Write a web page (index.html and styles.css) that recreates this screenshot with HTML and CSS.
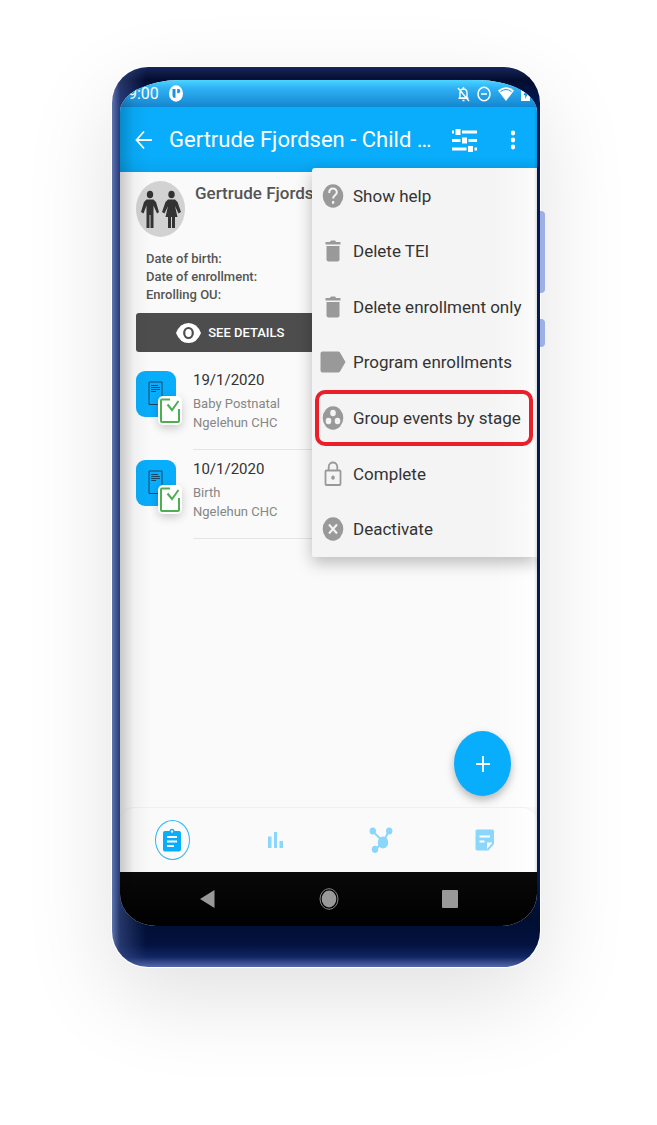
FILE: index.html
```html
<!DOCTYPE html>
<html lang="en">
<head>
<meta charset="utf-8">
<meta name="viewport" content="width=device-width, initial-scale=1">
<title>Gertrude Fjordsen - Child Programme</title>
<link rel="stylesheet" href="styles.css">
</head>
<body>
<main class="page">
  <div class="phone">
    <span class="side-key side-key-volume"></span>
    <span class="side-key side-key-power"></span>
    <div class="screen">
      <div class="status-bar">
        <span class="clock">9:00</span>
        <svg class="status-app" width="14" height="17" viewBox="0 0 14 17"><ellipse cx="7" cy="8.500" rx="7" ry="8.200" fill="#fff"/><path d="M3.500 4h3v9c-2 0-3-.8-3-2.500zM8.200 4h1.200a1.900 2.100 0 0 1 0 4.200H8.200z" fill="#1b93dc"/></svg>
        <span class="status-space"></span>
        <svg width="13" height="16" viewBox="0 0 13 16" fill="none" stroke="#fff" stroke-width="1.400"><path d="M3 12V7c0-2.500 1.200-4 3.500-4S10 4.500 10 7v5zM1.500 12.300h10M6.500 1v2M5.500 14.500h2M1 2l11 13"/></svg>
        <svg width="14" height="16" viewBox="0 0 14 16" fill="none" stroke="#fff" stroke-width="1.500"><ellipse cx="7" cy="8" rx="6" ry="6.700"/><path d="M4 8h6"/></svg>
        <svg width="16" height="16" viewBox="0 0 16 16"><path d="M0 4.500Q8-2 16 4.500L8 15z" fill="#fff"/><path d="M2.500 5.500Q8 1.500 13.500 5.500" fill="none" stroke="#1c9be6"/></svg>
        <svg width="9" height="16" viewBox="0 0 9 16"><path d="M0 2.500h2.500V1h4v1.500H9V15H0z" fill="#fff"/><path d="M5 4.500 2.500 9h1.700v4L6.700 8H5z" fill="#1c8fd8"/></svg>
      </div>
      <header class="app-bar">
        <button class="icon-button" aria-label="Back"><svg width="18" height="20" viewBox="0 0 18 20" fill="none" stroke="#fff" stroke-width="1.800"><path d="M17 10H1.500M9 1.500 1.500 10 9 18.500"/></svg></button>
        <h1 class="app-title">Gertrude Fjordsen - Child …</h1>
        <button class="icon-button filter-button" aria-label="Filters"><svg width="25" height="24" viewBox="0 0 25 24" fill="#fff"><path d="M0 2.500h2v3H0zM3.500 1h5v6h-5zM10 2.500h15v3H10zM0 11h8.500v3H0zM10 9.500h5v6h-5zM16.500 11H25v3h-8.500zM0 19.500h14.500v3H0zM16 18h5v6h-5zM22.500 19.500H25v3h-2.500z"/></svg></button>
        <button class="icon-button more-button" aria-label="More options" aria-expanded="true"><svg width="6" height="20" viewBox="0 0 6 20" fill="#fff"><ellipse cx="3" cy="3" rx="2.200" ry="2.400"/><ellipse cx="3" cy="10" rx="2.200" ry="2.400"/><ellipse cx="3" cy="17" rx="2.200" ry="2.400"/></svg></button>
      </header>
      <section class="content">
        <div class="person">
          <svg class="avatar" width="49" height="56" viewBox="0 0 49 56"><ellipse cx="24.500" cy="28" rx="24.500" ry="28" fill="#d2d2d2"/><g fill="#333"><ellipse cx="14" cy="13.500" rx="3.200" ry="3.800"/><ellipse cx="35.500" cy="13.500" rx="3.200" ry="3.800"/><path d="M10.500 18.500h7L20 21l3 10-2 1.500-3.500-8V47h-3V34h-1v13h-3V24.500L7.500 32.500 5 31l3-10zM32 18.500h7l2.500 2.500L45 31l-2.500 1.500L39 25l2.500 11H39v11h-3V36h-1v11h-3V36h-2.500L32 25l-3.500 7.500L26 31l3.500-10z"/></g></svg>
          <h2 class="person-name">Gertrude Fjordsen</h2>
        </div>
        <ul class="attributes">
          <li>Date of birth:</li>
          <li>Date of enrollment:</li>
          <li>Enrolling OU:</li>
        </ul>
        <button class="details-button"><svg width="25" height="20" viewBox="0 0 25 20"><path d="M0 10Q4 0 12.500 0T25 10Q21 20 12.500 20T0 10z" fill="#fff"/><ellipse cx="12.500" cy="10" rx="4.300" ry="5" fill="none" stroke="#4d4d4d" stroke-width="2.200"/></svg>SEE DETAILS</button>
        <ul class="events">
          <li class="event">
            <span class="event-tile">
              <svg class="doc" width="15" height="25" viewBox="0 0 15 25" fill="none" stroke="#164766"><path d="M10 23.500H1V1h13v18.500M13.500 19.500a4 4 0 0 0-3 4M3 4.500h7M3 6.500h9M3 8.500h9M3 10.500h5"/></svg>
              <span class="event-check"><svg width="20" height="25" viewBox="0 0 20 25" fill="none" stroke="#4caf50" stroke-width="2"><path d="M10 1.500H2Q1 1.500 1 2.500V23q0 1 1 1h16q1 0 1-1V11M7.500 6.500l4.500 5.500 6.500-9"/></svg></span>
            </span>
            <div class="event-text"><strong>19/1/2020</strong><span>Baby Postnatal</span><span>Ngelehun CHC</span></div>
          </li>
          <li class="event">
            <span class="event-tile">
              <svg class="doc" width="15" height="25" viewBox="0 0 15 25" fill="none" stroke="#164766"><path d="M10 23.500H1V1h13v18.500M13.500 19.500a4 4 0 0 0-3 4M3 4.500h7M3 6.500h9M3 8.500h9M3 10.500h5"/></svg>
              <span class="event-check"><svg width="20" height="25" viewBox="0 0 20 25" fill="none" stroke="#4caf50" stroke-width="2"><path d="M10 1.500H2Q1 1.500 1 2.500V23q0 1 1 1h16q1 0 1-1V11M7.500 6.500l4.500 5.500 6.500-9"/></svg></span>
            </span>
            <div class="event-text"><strong>10/1/2020</strong><span>Birth</span><span>Ngelehun CHC</span></div>
          </li>
        </ul>
        <button class="fab" aria-label="Add event"><svg width="16" height="18" viewBox="0 0 16 18" stroke="#fff" stroke-width="1.800"><path d="M8 1v16M1 9h14"/></svg></button>
        <div class="menu" role="menu">
          <button class="menu-item" role="menuitem"><svg width="26" height="26" viewBox="0 0 26 26"><ellipse cx="13" cy="13" rx="10.300" ry="11.700" fill="#999"/><path d="M9.200 10c0-6 7.600-5.500 7.600-.8 0 3-3.700 3.300-3.700 6.300" fill="none" stroke="#f4f4f4" stroke-width="2"/><path d="M12 18h2.200v2.700H12z" fill="#f4f4f4"/></svg>Show help</button>
          <button class="menu-item" role="menuitem"><svg width="26" height="26" viewBox="0 0 26 26" fill="#999"><path d="M5.500 4h4.300l1.200-1.500h4L16.200 4h4.300v2.500h-15zM6.500 8h13v13.500q0 2-2 2h-9q-2 0-2-2z"/></svg>Delete TEI</button>
          <button class="menu-item" role="menuitem"><svg width="26" height="26" viewBox="0 0 26 26" fill="#999"><path d="M5.500 4h4.300l1.200-1.500h4L16.200 4h4.300v2.500h-15zM6.500 8h13v13.500q0 2-2 2h-9q-2 0-2-2z"/></svg>Delete enrollment only</button>
          <button class="menu-item" role="menuitem"><svg width="26" height="26" viewBox="0 0 26 26" fill="#999"><path d="M2.500 2.500H18q1.500 0 2 1L25.500 13 20 22.500q-.5 1-2 1H2.500q-2 0-2-2v-17q0-2 2-2z"/></svg>Program enrollments</button>
          <button class="menu-item menu-item-marked" role="menuitem"><svg width="26" height="26" viewBox="0 0 26 26"><ellipse cx="13" cy="13" rx="10.300" ry="11.700" fill="#999"/><g fill="#f4f4f4"><ellipse cx="13" cy="8" rx="2.800" ry="3.200"/><ellipse cx="8.500" cy="16" rx="2.800" ry="3.200"/><ellipse cx="17.500" cy="16" rx="2.800" ry="3.200"/></g></svg>Group events by stage</button>
          <button class="menu-item" role="menuitem"><svg width="26" height="26" viewBox="0 0 26 26" fill="none" stroke="#999" stroke-width="1.800"><rect x="5.500" y="9.500" width="15" height="14.500" rx="1"/><path d="M8.700 9.500V6c0-6 8.600-6 8.600 0v3.500"/><ellipse cx="13" cy="16.700" rx="1.800" ry="2.100" fill="#999" stroke="none"/></svg>Complete</button>
          <button class="menu-item" role="menuitem"><svg width="26" height="26" viewBox="0 0 26 26"><ellipse cx="13" cy="13" rx="10.300" ry="11.700" fill="#999"/><path d="m9 8.500 8 9m0-9-8 9" stroke="#f4f4f4" stroke-width="2"/></svg>Deactivate</button>
        </div>
      </section>
      <nav class="tabs">
        <button class="tab tab-active" aria-label="Details"><svg width="18" height="24" viewBox="0 0 18 24"><path d="M2 3h4.500C7 0 11 0 11.500 3H16q2 0 2 2v16.500q0 2-2 2H2q-2 0-2-2V5q0-2 2-2z" fill="#08adfb"/><ellipse cx="9" cy="3.500" rx="1.100" ry="1.300" fill="#fff"/><path d="M4 9h10M4 13.500h10M4 18h7" stroke="#fff" stroke-width="2"/></svg></button>
        <button class="tab" aria-label="Analytics"><svg width="16" height="18" viewBox="0 0 16 18" fill="#8bd6fb"><path d="M0 5.500h3.500V17H0zM6 1h3v16H6zM11.500 10H15v7h-3.500z"/></svg></button>
        <button class="tab" aria-label="Relationships"><svg width="24" height="26" viewBox="0 0 24 26" fill="#8bd6fb" stroke="#8bd6fb"><path d="m4 4.500 10 10M20 4l-6 11-7.500 7.500" fill="none" stroke-width="2"/><g stroke="none"><ellipse cx="14" cy="15.500" rx="5.200" ry="6"/><ellipse cx="3.800" cy="4" rx="3.200" ry="3.600"/><ellipse cx="20.200" cy="4" rx="3.200" ry="3.600"/><ellipse cx="6" cy="22.300" rx="3.200" ry="3.600"/></g></svg></button>
        <button class="tab" aria-label="Notes"><svg width="20" height="22" viewBox="0 0 20 22"><path d="M2 .5h15.500q1.500 0 1.500 2V15l-5.500 6.500H2q-1.500 0-1.500-2v-17Q.5.500 2 .5z" fill="#8bd6fb"/><path d="M4.500 7.500h10.500M4.500 12.500h5" stroke="#fff" stroke-width="2"/><path d="M12 20v-6.500h5.500z" fill="#fff"/></svg></button>
      </nav>
      <div class="system-bar">
        <button class="system-key" aria-label="System back"><svg width="15" height="20" viewBox="0 0 15 20"><path d="M14.500 1v18L0 10z" fill="#999"/></svg></button>
        <button class="system-key" aria-label="Home"><svg width="20" height="22" viewBox="0 0 20 22"><ellipse cx="10" cy="11" rx="9" ry="10.300" fill="none" stroke="#888"/><ellipse cx="10" cy="11" rx="7.300" ry="8.500" fill="#999"/></svg></button>
        <button class="system-key" aria-label="Recent apps"><svg width="16" height="18" viewBox="0 0 16 18"><rect width="16" height="18" rx="1" fill="#999"/></svg></button>
      </div>
    </div>
  </div>
</main>
</body>
</html>
```

FILE: styles.css
```css
* {
  box-sizing: border-box;
}

body {
  margin: 0;
  background: #fff;
  color: #333;
  font-family: Roboto, "Noto Sans", sans-serif;
}

button {
  margin: 0;
  padding: 0;
  border: 0;
  background: none;
  color: inherit;
  font: inherit;
  cursor: pointer;
}

ul {
  margin: 0;
  padding: 0;
  list-style: none;
}

svg {
  display: block;
  flex: none;
}

.page {
  min-height: 100vh;
  padding: 67px 117px 158px 112px;
  overflow: hidden;
}

.phone {
  position: relative;
  padding: 13px 3px 41px 8px;
  border-radius: 36px;
  background:
    linear-gradient(to right, #5d74ad 0, rgba(60, 80, 140, 0.6) 8px, transparent 34px),
    linear-gradient(to bottom, #16265a 0, #030d2f 13px, transparent 40px),
    linear-gradient(to top, #5468ab 0, #122664 10px, #03123f 22px, #000e30 50px, #03195a 90px);
  box-shadow:
    0 0 0 1px #fff,
    0 30px 90px rgba(0, 0, 0, 0.12);
}

.side-key {
  position: absolute;
  left: 100%;
  width: 5px;
  border-radius: 0 4px 4px 0;
  background: #9dafe3;
}

.side-key-volume {
  top: 144px;
  height: 82px;
}

.side-key-power {
  top: 252px;
  height: 28px;
}

.screen {
  position: relative;
  display: flex;
  flex-direction: column;
  overflow: hidden;
  border-radius: 60px 60px 36px 36px / 32px 32px 32px 32px;
  background: #fafafa;
}

.screen::after {
  content: "";
  position: absolute;
  inset: 0;
  background:
    linear-gradient(to right, rgba(0, 0, 0, 0.2) 0, rgba(0, 0, 0, 0.04) 14px, transparent 30px),
    linear-gradient(to left, rgba(0, 0, 0, 0.12) 0, transparent 3px);
  pointer-events: none;
}

.status-bar {
  display: flex;
  align-items: center;
  gap: 7px;
  height: 27px;
  padding: 0 7px 0 8px;
  background: linear-gradient(#4cd5ff 0, #2fb2f6 8px, #1486d0 27px);
  color: #fff;
  font-size: 16px;
  font-weight: 400;
}

.status-app {
  margin-left: 3px;
}

.status-space {
  flex: 1;
}

.app-bar {
  display: flex;
  align-items: center;
  height: 65px;
  padding: 0 21px 0 15px;
  background: linear-gradient(#09adfb 50px, #08a3ef 65px);
  color: #fff;
}

.icon-button {
  flex: none;
}

.app-title {
  flex: 1;
  margin: 0 0 0 16px;
  overflow: hidden;
  font-size: 22px;
  font-weight: 400;
  line-height: 28px;
  white-space: nowrap;
}

.filter-button {
  margin-left: 10px;
}

.more-button {
  margin-left: 33px;
}

.content {
  position: relative;
  min-height: 635px;
  padding: 9px 16px 0;
  background: linear-gradient(to left, #fff, #fafafa 40px);
}

.person {
  display: flex;
  gap: 10px;
  height: 69px;
}

.person-name {
  margin: 0;
  color: #555;
  font-size: 17px;
  font-weight: 500;
  line-height: 24px;
  white-space: nowrap;
}

.attributes {
  padding-left: 10px;
  color: #555;
  font-size: 13px;
  font-weight: 500;
  line-height: 18px;
}

.details-button {
  display: flex;
  align-items: center;
  justify-content: center;
  gap: 7px;
  width: 49%;
  height: 39px;
  margin: 9px 0;
  border-radius: 3px;
  background: #4d4d4d;
  color: #fff;
  font-size: 13px;
  font-weight: 500;
}

.event {
  display: flex;
  gap: 17px;
  height: 89px;
}

.event-tile {
  position: relative;
  flex: none;
  display: grid;
  place-items: center;
  width: 40px;
  height: 46px;
  margin-top: 10px;
  border-radius: 9px;
  background: #08adfb;
}

.doc {
  margin: 0 2px 2px 0;
}

.event-check {
  position: absolute;
  top: 25px;
  left: 22px;
  padding: 2px;
  border-radius: 5px;
  background: #fff;
  box-shadow: 0 3px 10px rgba(0, 0, 0, 0.2);
}

.event-text {
  display: flex;
  flex: 1;
  flex-direction: column;
  padding-top: 9px;
  border-bottom: 1px solid #e4e4e4;
  color: #868686;
  font-size: 13px;
  line-height: 19px;
}

.event-text strong {
  margin-bottom: 4px;
  color: #333;
  font-size: 15px;
  font-weight: 400;
  line-height: 20px;
}

.fab {
  position: absolute;
  right: 26px;
  bottom: 11px;
  display: grid;
  place-items: center;
  width: 57px;
  height: 65px;
  border-radius: 50%;
  background: #08adfb;
  box-shadow: 0 4px 8px rgba(0, 0, 0, 0.28);
}

.menu {
  position: absolute;
  top: -4px;
  right: 0;
  display: grid;
  grid-auto-rows: 1fr;
  width: 225px;
  height: 389px;
  border-radius: 3px 0 0 3px;
  background: linear-gradient(to right, #f4f4f4 80%, #fbfbfb);
  box-shadow: 0 6px 16px rgba(0, 0, 0, 0.25);
}

.menu-item {
  position: relative;
  display: flex;
  align-items: center;
  gap: 7px;
  padding-left: 8px;
  color: #333;
  font-size: 17px;
  text-align: left;
  white-space: nowrap;
}

.menu-item-marked::before {
  content: "";
  position: absolute;
  inset: 0 4px 0 3px;
  border: 4px solid #ea1f2a;
  border-radius: 10px;
}

.tabs {
  display: grid;
  grid-template-columns: repeat(4, 1fr);
  height: 65px;
  border-top: 1px solid #f0f0f0;
  border-radius: 14px 14px 0 0;
  background: linear-gradient(to left, #fff, #fafafa 40px);
}

.tab,
.system-key {
  display: grid;
  place-items: center;
}

.tab-active {
  justify-self: center;
  align-self: center;
  width: 35px;
  height: 40px;
  border: 1px solid #2eb5f3;
  border-radius: 50%;
}

.system-bar {
  display: grid;
  grid-template-columns: repeat(3, 1fr);
  height: 54px;
  padding: 0 27px;
  background: linear-gradient(#090909, #000);
}
```
